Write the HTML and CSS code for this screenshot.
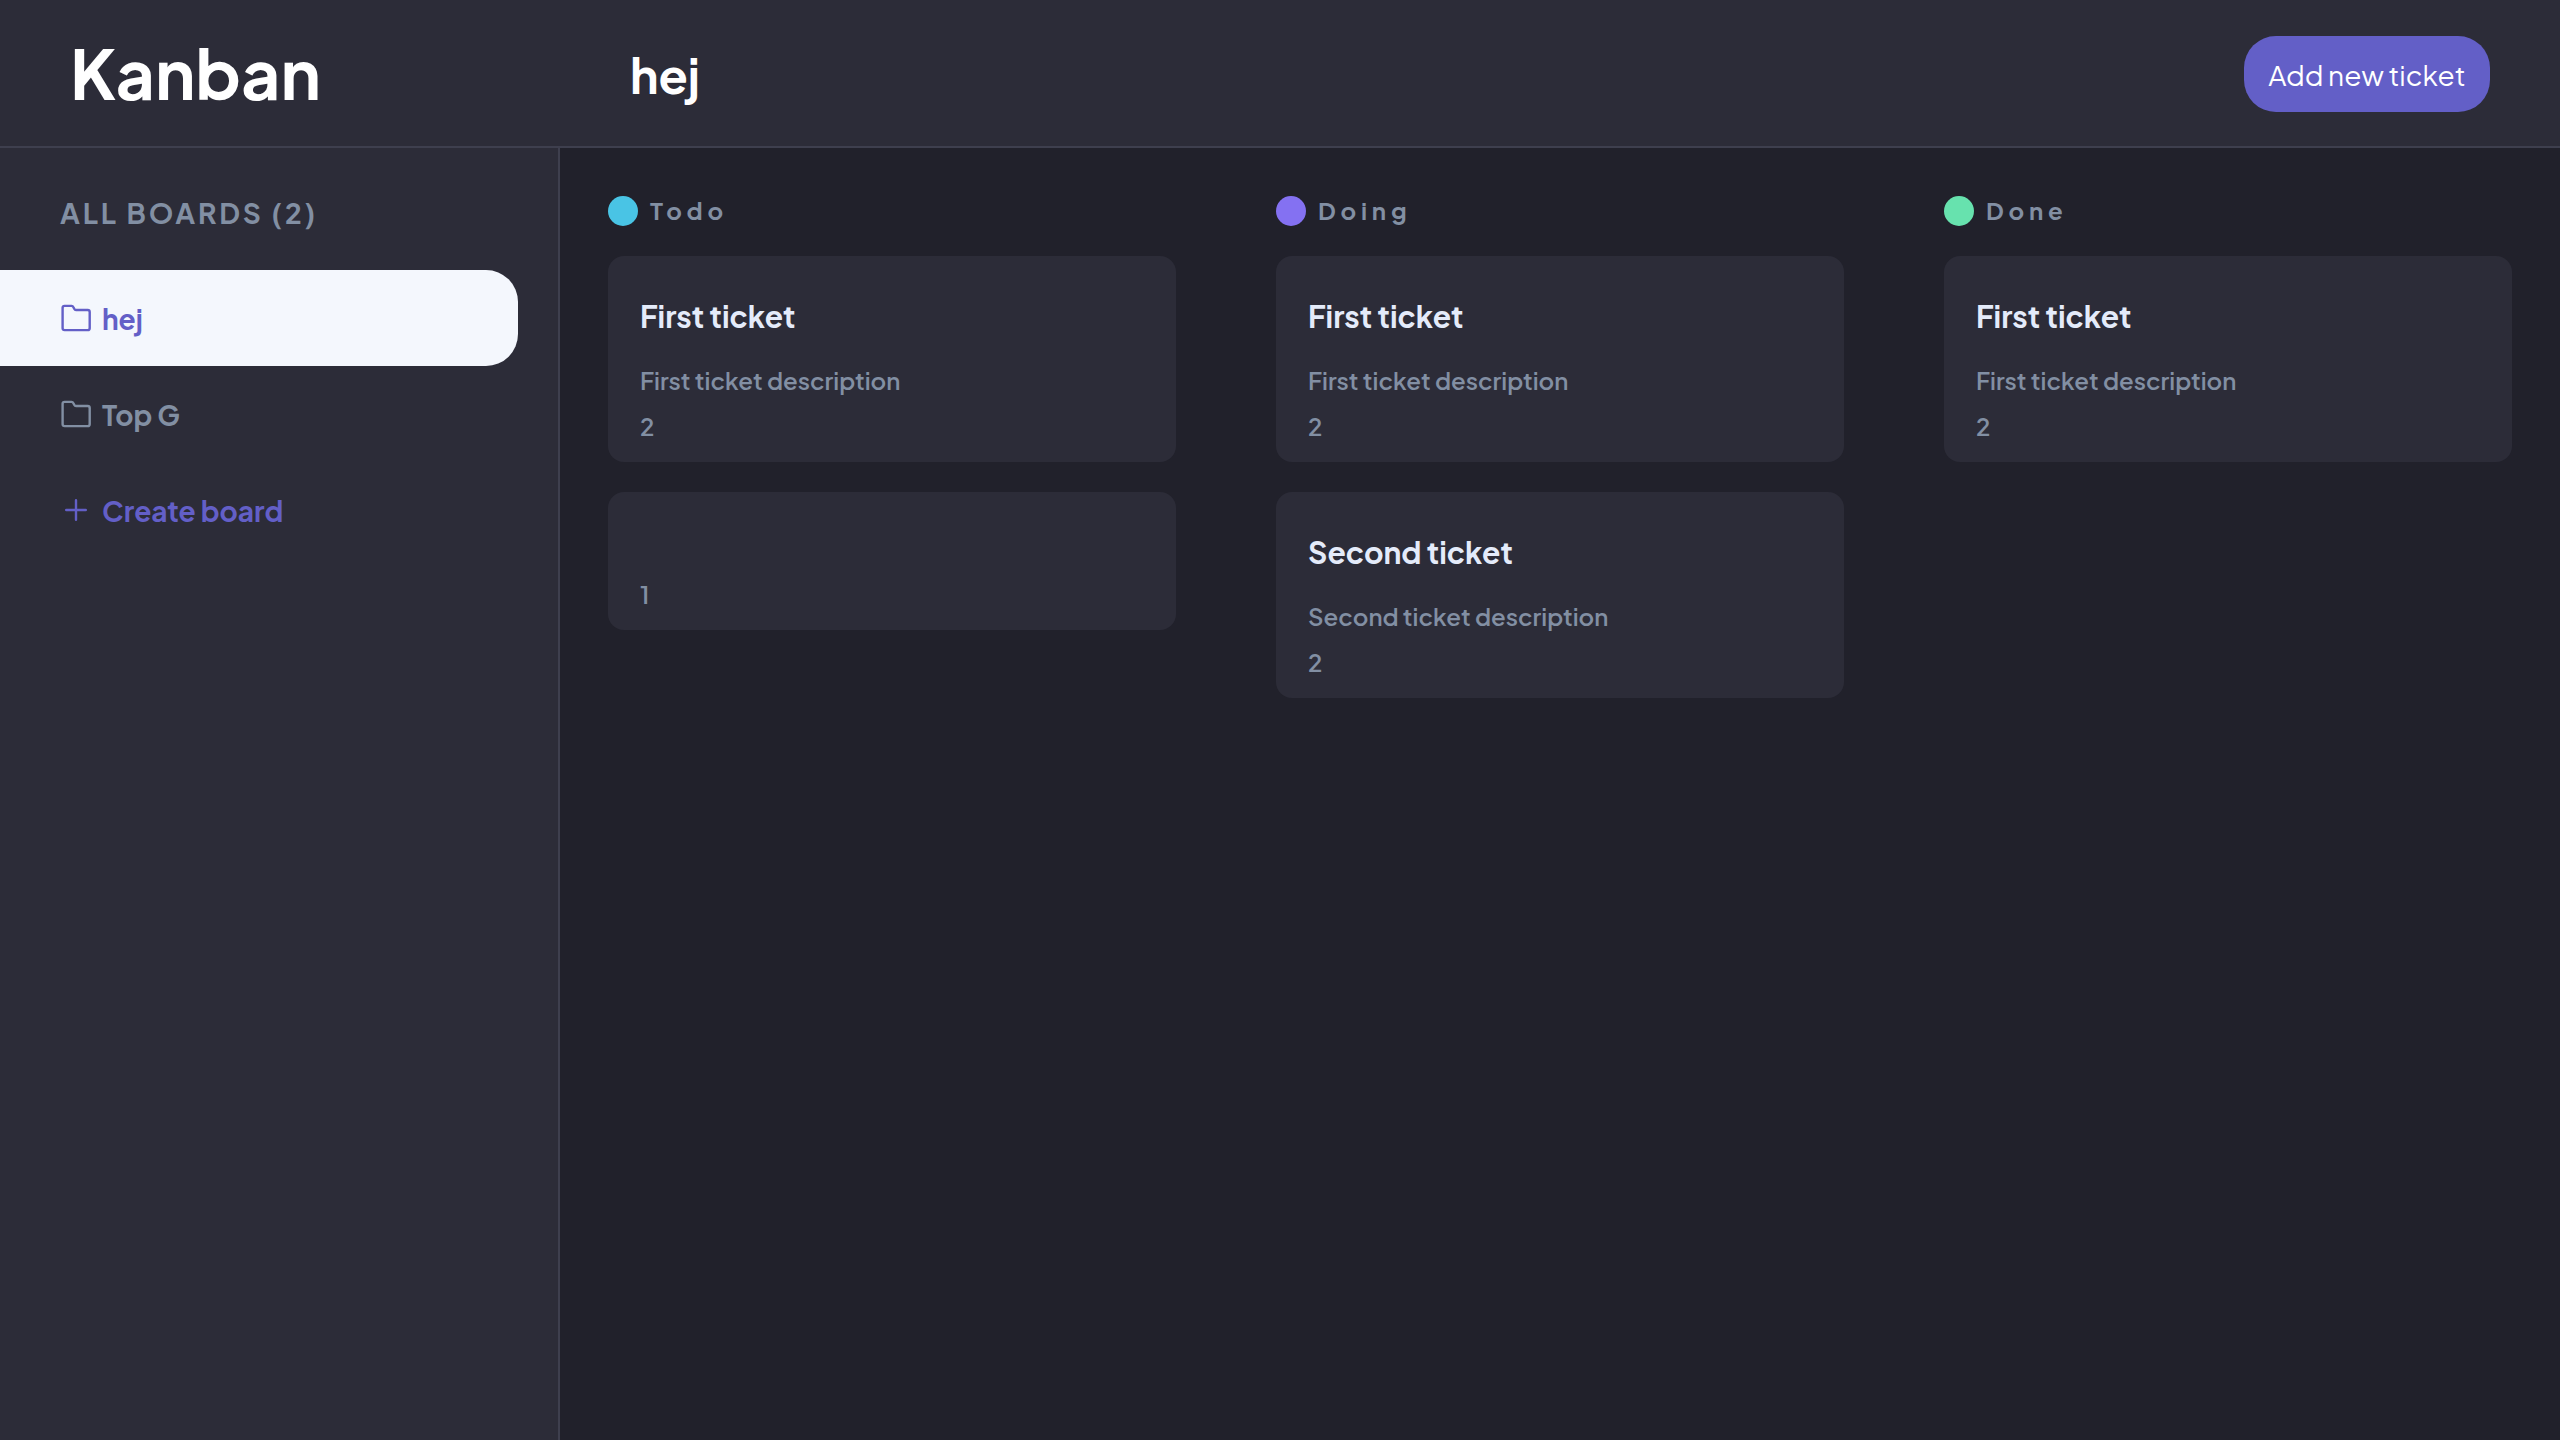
FILE: index.html
```html
<!DOCTYPE html>
<html lang="en">
<head>
<meta charset="utf-8">
<title>Kanban</title>
<link rel="stylesheet" href="styles.css">
</head>
<body>
<svg width="0" height="0" class="sprite">
  <symbol id="folder" viewBox="0 0 30 28">
    <path d="M1.6 3.8Q1.6 1.9 3.5 1.9H10.6Q11.8 1.9 12.3 3L13.2 4.8Q13.8 6 15 6H26.7Q28.7 6 28.7 8V24.2Q28.7 26.1 26.7 26.1H3.6Q1.6 26.1 1.6 24.2Z"/>
  </symbol>
  <symbol id="plus" viewBox="0 0 30 28">
    <path d="M15 4.2V23.8M5.2 14H24.8"/>
  </symbol>
</svg>
<header class="header">
  <div class="logo">Kanban</div>
  <h1 class="board-name">hej</h1>
  <button class="add">Add new ticket</button>
</header>
<div class="layout">
  <aside class="sidebar">
    <h2 class="side-title">ALL BOARDS (2)</h2>
    <nav class="boards">
      <a class="board active"><svg class="icon"><use href="#folder"/></svg><span>hej</span></a>
      <a class="board"><svg class="icon"><use href="#folder"/></svg><span>Top G</span></a>
      <a class="board create"><svg class="icon"><use href="#plus"/></svg><span>Create board</span></a>
    </nav>
  </aside>
  <main class="columns">
    <section class="column">
      <h3 class="column-head"><i class="dot todo"></i><span>Todo</span></h3>
      <article class="card">
        <h4>First ticket</h4>
        <p>First ticket description</p>
        <p class="count">2</p>
      </article>
      <article class="card untitled">
        <p class="count">1</p>
      </article>
    </section>
    <section class="column">
      <h3 class="column-head"><i class="dot doing"></i><span>Doing</span></h3>
      <article class="card">
        <h4>First ticket</h4>
        <p>First ticket description</p>
        <p class="count">2</p>
      </article>
      <article class="card">
        <h4>Second ticket</h4>
        <p>Second ticket description</p>
        <p class="count">2</p>
      </article>
    </section>
    <section class="column">
      <h3 class="column-head"><i class="dot done"></i><span>Done</span></h3>
      <article class="card">
        <h4>First ticket</h4>
        <p>First ticket description</p>
        <p class="count">2</p>
      </article>
    </section>
  </main>
</div>
</body>
</html>
```
FILE: styles.css
```css
* { box-sizing: border-box; margin: 0; padding: 0; }

body {
  display: flex;
  flex-direction: column;
  height: 100vh;
  overflow: hidden;
  background: #21212b;
  color: #fff;
  font-family: "Plus Jakarta Sans", Inter, sans-serif;
}

.sprite { position: absolute; }

.header {
  display: flex;
  align-items: center;
  flex: none;
  height: 148px;
  padding: 0 70px;
  background: #2c2c38;
  border-bottom: 2px solid #3e3f4e;
}

.logo {
  width: 560px;
  padding-bottom: 2px;
  font-size: 68px;
  font-weight: 700;
}

.board-name {
  padding-top: 3px;
  font-size: 48px;
  font-weight: 700;
}

.add {
  width: 246px;
  height: 76px;
  margin: 2px 0 0 auto;
  padding-top: 1px;
  border: 0;
  border-radius: 32px;
  background: #635fc7;
  color: #fff;
  font: 400 28px "Plus Jakarta Sans", Inter, sans-serif;
  white-space: nowrap;
}

.layout { display: flex; flex: 1; }

.sidebar {
  flex: none;
  width: 560px;
  background: #2c2c38;
  border-right: 2px solid #3e3f4e;
}

.side-title {
  padding: 7px 0 0 60px;
  color: #828fa3;
  font-size: 28px;
  font-weight: 700;
  line-height: 115px;
  letter-spacing: 0.1em;
}

.boards { display: flex; flex-direction: column; }

.board {
  display: flex;
  align-items: center;
  gap: 11px;
  width: 518px;
  height: 96px;
  padding-left: 61px;
  border-radius: 0 32px 32px 0;
  color: #828fa3;
  font-size: 28px;
  font-weight: 700;
}

.board span { padding-top: 1px; }
.board.active { background: #f4f7fd; color: #635fc7; }
.board.create { color: #635fc7; }

.icon {
  width: 30px;
  height: 28px;
  fill: none;
  stroke: currentColor;
  stroke-width: 2.4;
  stroke-linecap: round;
  stroke-linejoin: round;
}

.columns {
  display: grid;
  grid-template-columns: repeat(3, 1fr);
  align-items: start;
  gap: 100px;
  flex: 1;
  padding: 48px;
}

.column { display: flex; flex-direction: column; gap: 30px; }

.column-head {
  display: flex;
  align-items: center;
  gap: 12px;
  height: 30px;
  color: #828fa3;
  font-size: 24px;
  font-weight: 700;
  letter-spacing: 0.2em;
}

.column-head span { padding-bottom: 2px; }

.dot { width: 30px; height: 30px; border-radius: 50%; }
.todo { background: #49c4e5; }
.doing { background: #8471f2; }
.done { background: #67e2ae; }

.card {
  padding: 41px 32px 21px;
  border-radius: 16px;
  background: #2c2c38;
  color: #828fa3;
  font-size: 24px;
  font-weight: 600;
  line-height: 30px;
}

.card h4 {
  margin-bottom: 30px;
  color: #e4ebfa;
  font-size: 30px;
  font-weight: 700;
  line-height: 38px;
}

.card .count { margin-top: 16px; }
.card.untitled { padding-top: 71px; }
```
